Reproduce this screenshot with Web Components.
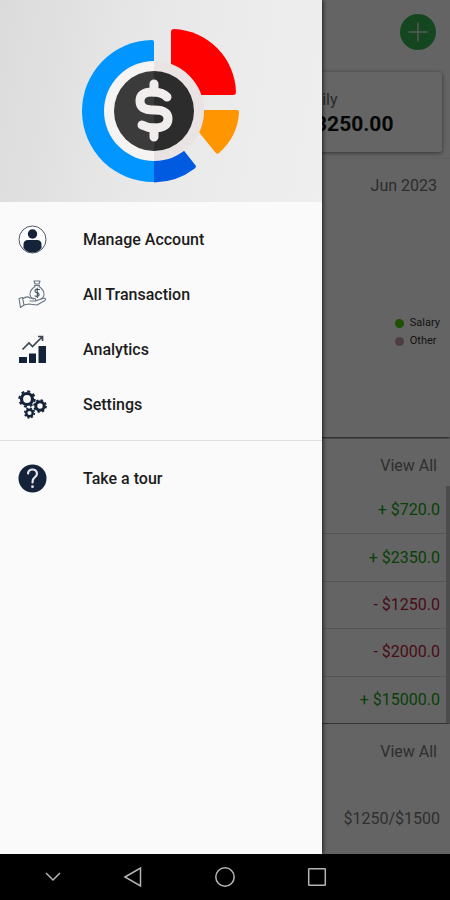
<!DOCTYPE html>
<html lang="en">
<head>
<meta charset="utf-8">
<meta name="viewport" content="width=device-width, initial-scale=1">
<title>Money Manager</title>
<style>
  html, body { margin: 0; height: 100%; }
  body { font-family: Roboto, "Liberation Sans", sans-serif; color: #1c1c1c; background: #000; }
</style>
</head>
<body>
<money-app></money-app>
<script>
const define = (name, html) => {
  const template = document.createElement('template');
  template.innerHTML = html;
  customElements.define(name, class extends HTMLElement {
    constructor() {
      super();
      this.attachShadow({ mode: 'open' }).append(template.content.cloneNode(true));
    }
  });
};

define('app-logo', `
<style>:host{display:block} svg{display:block}</style>
<svg width="158" height="156" viewBox="82 28 158 156" role="img" aria-label="Money Manager logo">
  <path d="M152 40Q154 40 154 42V182A71 71 0 0 1 152 40Z" fill="#0095ff"/>
  <path d="M154 150H174L182 151Q184 150 185 152L196 166Q196 168 194 169Q177 182 154 182.500Z" fill="#005be0"/>
  <path d="M171 32Q171 29 174 29A65 65 0 0 1 236 92Q236 95 233 95H201L171 64Z" fill="#f00"/>
  <path d="M200 110H237Q239 110 239 112Q238 136 219 153Q217 155 215 152L198 131Z" fill="#ff9500"/>
  <path d="M154 61a50 50 0 0 0 0 100z" fill="#f6f3f3"/>
  <path d="M154 61a50 50 0 0 1 0 100z" fill="#e9e3e3"/>
  <path d="M154 71a40 40 0 0 0 0 80z" fill="#3b3b3b"/>
  <path d="M154 71a40 40 0 0 1 0 80z" fill="#2c2c2c"/>
  <g fill="none" stroke="#f1eded" stroke-width="9" stroke-linecap="round">
    <path d="M154 84V92M154 128V137"/>
    <path d="M167 97C163 93 159 92 153 92C144 92 140 95 140 101C140 107 144 110 154 110C164 110 168 113 168 119C168 125 163 128 154 128C149 128 146 127 142 125"/>
  </g>
</svg>`);

define('nav-item', `
<style>
  :host{display:block}
  a{display:flex;align-items:center;gap:36px;height:55px;padding:0 18px;color:#1c1c1c;text-decoration:none;font-size:16px;line-height:20px;font-weight:500}
  .icon{display:flex;width:29px;height:29px}
</style>
<a href="#"><span class="icon"><slot name="icon"></slot></span><slot></slot></a>`);

define('app-drawer', `
<style>
  :host{display:flex;flex-direction:column;background:#fafafa;box-shadow:1px 0 4px rgba(0,0,0,.7)}
  header{display:flex;justify-content:center;padding:28px 0 18px;background:linear-gradient(100deg,#dbdbdb,#e8e8e8 45%,#efefef)}
  nav{padding:10px 0 8px}
  nav + nav{border-top:1px solid #dedede}
  svg{display:block;width:29px;height:29px;color:#14233a}
</style>
<header><app-logo></app-logo></header>
<nav aria-label="Main">
  <nav-item>
    <svg slot="icon" viewBox="0 0 29 29" fill="currentColor"><circle cx="14.500" cy="14.500" r="13.500" fill="#fff" stroke="#4c5665"/><circle cx="14.500" cy="9" r="4.700"/><path d="M5.500 23V19.500Q5.500 15 10 15H19Q23.500 15 23.500 19.500V23Q20 27.500 14.500 27.500T5.500 23Z"/></svg>
    Manage Account
  </nav-item>
  <nav-item>
    <svg slot="icon" viewBox="0 0 29 29" fill="none" stroke="#687380" stroke-width="1.100" stroke-linejoin="round" stroke-linecap="round"><path d="M16 1H22L21 4H17ZM16.500 5.500H21.500M17 6.500Q11.500 10 12 15Q12.500 18 15 19M21 6.500Q26.500 10 26 15Q25.500 18 23 19"/><path d="M21.500 9.500Q17 8.500 17 11Q17 12.500 19 12.800Q21.500 13.200 21 15Q20.500 17 17 16M19.300 8V17.500" stroke="#45505e"/><path d="M1 18.500L4.500 17.500L6 25L2.500 27.500ZM5 18.500Q9 15.500 12 18L17 18.500Q18.500 20 17 21H12M17.500 21L26 18Q28.500 18.500 27 20.500L19 25Q14 24.500 11 24L6 25"/></svg>
    All Transaction
  </nav-item>
  <nav-item>
    <svg slot="icon" viewBox="0 0 29 29"><path d="M1 22H9V28H1ZM11 18.500H18V28H11ZM20.500 11H28V28H20.500Z" fill="currentColor"/><path d="M4.500 14.500L11 8L14.500 11.500L24 2M20 1.500H24.500V6" fill="none" stroke="#3c4653" stroke-width="1.700"/></svg>
    Analytics
  </nav-item>
  <nav-item>
    <svg slot="icon" viewBox="0 0 29 29" fill="none" stroke="currentColor"><circle cx="9" cy="9" r="5.500" stroke-width="3.200"/><circle cx="9" cy="9" r="7.700" stroke-width="2" stroke-dasharray="3.020 3.020"/><circle cx="22" cy="16" r="4.200" stroke-width="3"/><circle cx="22" cy="16" r="6" stroke-width="1.700" stroke-dasharray="2.350 2.360"/><circle cx="11.500" cy="23" r="3.300" stroke-width="2.400"/><circle cx="11.500" cy="23" r="4.900" stroke-width="1.500" stroke-dasharray="1.920 1.920"/></svg>
    Settings
  </nav-item>
</nav>
<nav aria-label="Help">
  <nav-item>
    <svg slot="icon" viewBox="0 0 29 29"><circle cx="14.500" cy="14.500" r="14" fill="currentColor"/><path d="M10 9.500Q10.500 5.500 14.500 5.500T19 9.500Q19 12 16.500 13.700Q14.500 15 14.500 18.500" fill="none" stroke="#e4e8ec" stroke-width="2.200" stroke-linecap="round"/><circle cx="14.500" cy="22.700" r="1.400" fill="#e4e8ec"/></svg>
    Take a tour
  </nav-item>
</nav>`);

define('balance-card', `
<style>
  :host{display:flex;flex-direction:column;justify-content:center;align-items:flex-start;box-sizing:border-box;height:80px;padding-left:46px;border-radius:3px;background:#fdfdfd;box-shadow:0 1px 4px rgba(0,0,0,.5)}
  .label{font-size:16px;line-height:24px;color:#6b6b6b}
  .sum{font-size:21px;line-height:24px;font-weight:700;color:#111}
</style>
<span class="label"><slot name="label"></slot></span><span class="sum"><slot></slot></span>`);

define('chart-card', `
<style>
  :host{display:flex;flex-direction:column;box-sizing:border-box;height:278px;padding:14px 13px 0 0;text-align:right;background:#fafafa;box-shadow:0 1px 2px rgba(0,0,0,.7)}
  .month{font-size:16px;line-height:26px;color:#707070}
  ul{margin:115px -3px 0 auto;padding:0;list-style:none;text-align:left;font-size:11px;line-height:18px;color:#333}
  li{display:flex;align-items:center;gap:6px}
  i{width:9px;height:9px;border-radius:50%;background:#50c800}
  li + li i{background:#c49aa5}
</style>
<span class="month">Jun 2023</span>
<ul><li><i></i>Salary</li><li><i></i>Other</li></ul>`);

define('view-all', `
<style>
  :host{display:flex;justify-content:flex-end;padding-right:13px}
  a{font-size:16px;line-height:24px;color:#757575;text-decoration:none}
</style>
<a href="#">View All</a>`);

define('transaction-card', `
<style>
  :host{display:grid;grid-template-columns:1fr 4px;height:284px;grid-template-rows:47px 1fr;background:#fafafa;box-shadow:0 1px 2px rgba(0,0,0,.7)}
  view-all{grid-column:1 / -1;padding-top:15px}
  ul{display:grid;grid-auto-rows:1fr;margin:0;padding:0;list-style:none;font-size:16px;line-height:24px;color:#16a016}
  li{display:flex;align-items:center;justify-content:flex-end;padding-right:6px}
  li + li{border-top:1px solid #d5d5d5}
  .out{color:#b41e3c}
  .bar{background:#bdbdbd}
</style>
<view-all></view-all>
<ul><li>+ $720.0</li><li>+ $2350.0</li><li class="out">- $1250.0</li><li class="out">- $2000.0</li><li>+ $15000.0</li></ul>
<span class="bar"></span>`);

define('budget-card', `
<style>
  :host{display:block;background:#fafafa}
  view-all{padding-top:16px}
  p{margin:43px 10px 0 0;text-align:right;font-size:16px;line-height:24px;color:#757575}
</style>
<view-all></view-all>
<p>$1250/$1500</p>`);

define('home-screen', `
<style>
  :host{display:flex;flex-direction:column;background:#fafafa;overflow:hidden}
  header{display:flex;justify-content:flex-end;padding:14px 14px 22px}
  button{display:grid;place-items:center;width:36px;height:36px;padding:0;border:0;border-radius:50%;background:#34b050}
  .balances{display:grid;grid-template-columns:1fr 1fr;column-gap:64px;padding:0 8px 7px}
  balance-card{grid-column:2}
  transaction-card{margin-top:2px}
  budget-card{flex:1;margin-top:1px}
</style>
<header><button aria-label="Add"><svg width="20" height="20" viewBox="0 0 20 20" stroke="#d0e0d4" stroke-width="1.500"><path d="M10 .5V19.500M.5 10H19.500"/></svg></button></header>
<div class="balances"><balance-card><span slot="label">Daily</span>$3250.00</balance-card></div>
<chart-card></chart-card>
<transaction-card></transaction-card>
<budget-card></budget-card>`);

define('system-bar', `
<style>
  :host{display:grid;grid-template-columns:68fr 92fr 92fr 92fr;padding:0 87px 0 19px;background:#000}
  button{display:grid;place-items:center;height:46px;padding:0;border:0;background:none}
  svg{fill:none;stroke:#b5b5b5;stroke-width:1.500}
</style>
<button aria-label="Hide keyboard"><svg width="22" height="22" viewBox="0 0 22 22"><path d="M4 7L11 14L18 7"/></svg></button>
<button aria-label="Back"><svg width="22" height="22" viewBox="0 0 22 22"><path d="M3 11L18.500 2V20Z"/></svg></button>
<button aria-label="Home"><svg width="22" height="22" viewBox="0 0 22 22"><circle cx="11" cy="11" r="9.200"/></svg></button>
<button aria-label="Recent apps"><svg width="22" height="22" viewBox="0 0 22 22"><rect x="2.700" y="2.700" width="16.600" height="16.600" rx=".5"/></svg></button>`);

define('money-app', `
<style>
  :host{display:grid;grid-template:minmax(0,1fr) auto / minmax(0,1fr);min-height:100vh}
  home-screen,.scrim,app-drawer{grid-area:1 / 1}
  .scrim{background:rgba(0,0,0,.6)}
  app-drawer{margin-right:128px}
</style>
<home-screen></home-screen>
<div class="scrim"></div>
<app-drawer></app-drawer>
<system-bar></system-bar>`);
</script>
</body>
</html>
